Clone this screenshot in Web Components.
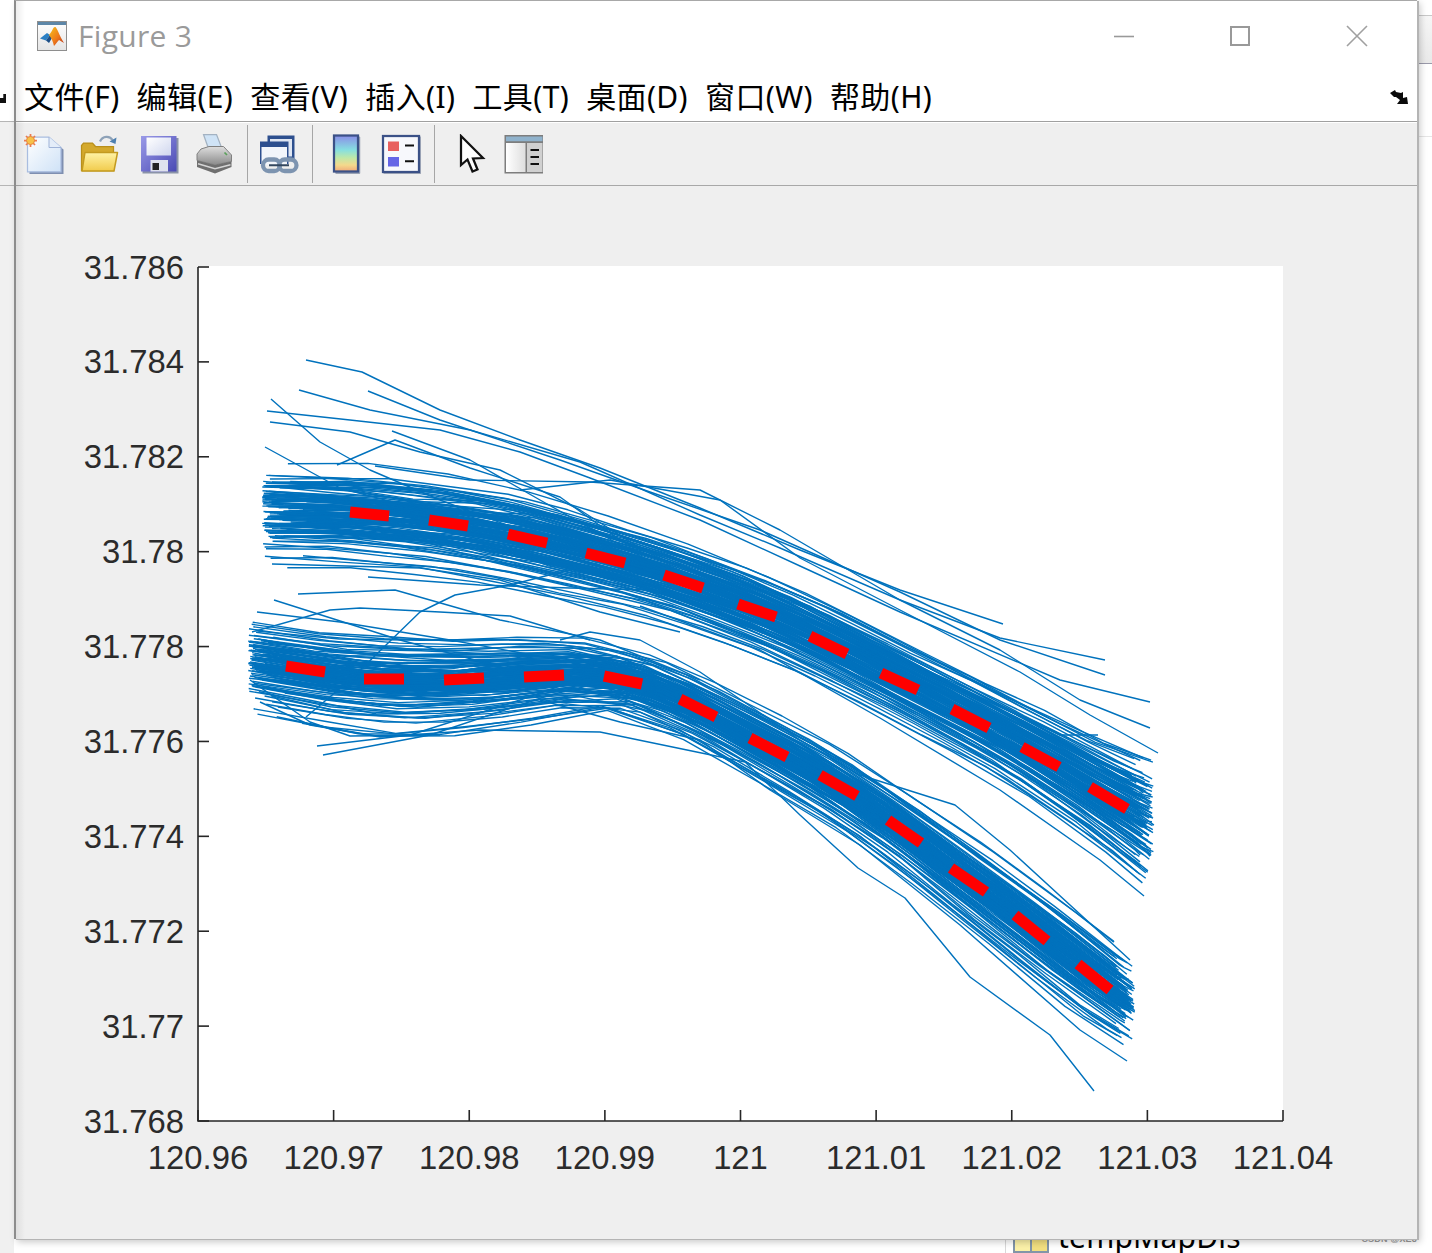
<!DOCTYPE html>
<html lang="zh">
<head>
<meta charset="utf-8">
<title>Figure 3</title>
<style>
  html, body { margin: 0; padding: 0; background: #fff; }
</style>
</head>
<body>
<shot-page>
  <desk-backdrop slot="back"></desk-backdrop>
  <figure-window title-text="Figure 3">
    <menu-item>文件(F)</menu-item>
    <menu-item>编辑(E)</menu-item>
    <menu-item>查看(V)</menu-item>
    <menu-item>插入(I)</menu-item>
    <menu-item>工具(T)</menu-item>
    <menu-item>桌面(D)</menu-item>
    <menu-item>窗口(W)</menu-item>
    <menu-item>帮助(H)</menu-item>

    <tool-icon slot="tools" name="new" style="margin-left:8px"></tool-icon>
    <tool-icon slot="tools" name="open" style="margin-left:16px"></tool-icon>
    <tool-icon slot="tools" name="save" style="margin-left:19px"></tool-icon>
    <tool-icon slot="tools" name="print" style="margin-left:16px"></tool-icon>
    <tool-sep slot="tools" style="margin-left:12px"></tool-sep>
    <tool-icon slot="tools" name="link" style="margin-left:11px"></tool-icon>
    <tool-sep slot="tools" style="margin-left:13px"></tool-sep>
    <tool-icon slot="tools" name="colorbar" style="margin-left:13px"></tool-icon>
    <tool-icon slot="tools" name="legend" style="margin-left:15px"></tool-icon>
    <tool-sep slot="tools" style="margin-left:13px"></tool-sep>
    <tool-icon slot="tools" name="cursor" style="margin-left:12px"></tool-icon>
    <tool-icon slot="tools" name="panel" style="margin-left:16px"></tool-icon>

    <plot-chart slot="plot"></plot-chart>
  </figure-window>
</shot-page>

<script>
// --- page shell ---
class ShotPage extends HTMLElement {
  constructor() {
    super();
    this.attachShadow({ mode: 'open' });
    this.shadowRoot.innerHTML = `
      <style>
        :host {
          display: block;
          position: relative;
          width: 1432px;
          height: 1253px;
          overflow: hidden;
          background: #fff;
        }
      </style>
      <slot name="back"></slot>
      <slot></slot>
    `;
  }
}

// whatever is visible around the screenshot window
class DeskBackdrop extends HTMLElement {
  constructor() {
    super();
    this.attachShadow({ mode: 'open' });
    this.shadowRoot.innerHTML = `
      <style>
        :host {
          position: absolute;
          inset: 0;
          display: grid;
          grid-template-columns: 14px 1fr 15px;
          grid-template-rows: 1fr;
        }
        .left { display: flex; flex-direction: column; }
        .left .a { height: 121px; background: #fff; border-bottom: 1px solid #b5b5b5; box-sizing: content-box; display: flex; align-items: flex-end; }
        .left .b { height: 63px; background: #f0f0f0; border-bottom: 1px solid #b5b5b5; }
        .left .c { flex: 1; background: #f0f0f0; }
        .mark { width: 6px; height: 9px; margin-bottom: 18px; background: #111; clip-path: polygon(0 45%, 55% 45%, 55% 0, 100% 0, 100% 100%, 0 100%); }
        .mid { display: flex; align-items: flex-end; padding-left: 991px; }
        .file { display: flex; align-items: flex-end; height: 30px; border-left: 1px solid #d8d8d8; padding-left: 7px; gap: 9px; }
        .folder { width: 36px; height: 30px; box-sizing: border-box; border: 2px solid #8295a8; background: linear-gradient(90deg, #fbf1a8 0 48%, #8295a8 48% 54%, #f2df80 54%); }
        .name { font: 30px/30px "Noto Sans", "Open Sans", sans-serif; color: #000; height: 30px; margin-bottom: 1px; letter-spacing: .2px; }
        .right { display: flex; flex-direction: column; position: relative; }
        .r1 { height: 15px; background: #fff; border-bottom: 1px solid #c8c8c8; }
        .r2 { height: 47px; background: linear-gradient(#f6f6f6, #e9e9e9); border-bottom: 1px solid #9a9aaa; }
        .r3 { height: 72px; background: #fff; border-bottom: 1px solid #e6e6e6; }
        .r4 { flex: 1; background: #fff; }
        .wm { position: absolute; right: 15px; bottom: 9px; font: bold 9px/10px "Liberation Sans", sans-serif; color: #999; white-space: nowrap; letter-spacing: .2px; }
      </style>
      <div class="left"><div class="a"><div class="mark"></div></div><div class="b"></div><div class="c"></div></div>
      <div class="mid">
        <div class="file"><div class="folder"></div><div class="name">tempMapDis</div></div>
      </div>
      <div class="right"><div class="r1"></div><div class="r2"></div><div class="r3"></div><div class="r4"></div><div class="wm">CSDN @XE8</div></div>
    `;
  }
}

// --- the figure window ---
class FigureWindow extends HTMLElement {
  constructor() {
    super();
    const title = this.getAttribute('title-text') || '';
    this.attachShadow({ mode: 'open' });
    this.shadowRoot.innerHTML = `
      <style>
        :host {
          display: flex;
          flex-direction: column;
          position: relative;
          box-sizing: border-box;
          width: 1403px;
          height: 1239px;
          margin-left: 14px;
          border-left: 2px solid #8c8c8c;
          border-top: 1px solid #a8a8a8;
          background: #efefef;
          box-shadow: 2px 1px 0 #b4b4b4, 3px 3px 7px rgba(0,0,0,.22);
        }
        :host::after {
          content: '';
          position: absolute;
          left: 0;
          top: 0;
          bottom: 0;
          width: 9px;
          background: linear-gradient(90deg, rgba(0,0,0,.07), rgba(0,0,0,0));
          pointer-events: none;
        }
        .titlebar {
          height: 72px;
          flex: none;
          box-sizing: border-box;
          display: flex;
          align-items: center;
          padding-left: 21px;
          padding-bottom: 2px;
          background: #fff;
        }
        .logo { width: 30px; height: 30px; flex: none; }
        .name {
          margin-left: 11px;
          font: 30px/40px "Open Sans", "Noto Sans", sans-serif;
          letter-spacing: .3px;
          color: #9a9a9a;
        }
        .winbtns { margin-left: auto; display: flex; align-items: center; }
        .winbtns svg { display: block; width: 22px; height: 22px; }
        .min { margin-right: 94px; }
        .max { margin-right: 95px; }
        .cls { margin-right: 49px; }
        .menubar {
          height: 49px;
          flex: none;
          box-sizing: border-box;
          display: flex;
          align-items: center;
          gap: 17px;
          padding-left: 8px;
          background: #fff;
          border-bottom: 1px solid #a0a0a0;
        }
        .dock { margin-left: auto; margin-right: 8px; width: 20px; height: 16px; display: block; }
        .toolbar {
          height: 64px;
          flex: none;
          box-sizing: border-box;
          display: flex;
          align-items: center;
          background: #efefef;
          border-bottom: 1px solid #a8a8a8;
          box-shadow: inset 0 1px 0 #fff;
        }
        .plot { flex: 1; min-height: 0; }
      </style>
      <div class="titlebar">
        <svg class="logo" viewBox="0 0 30 30">
          <defs>
            <linearGradient id="lg-bg" x1="0" y1="0" x2="0" y2="1"><stop offset="0" stop-color="#fff"/><stop offset="1" stop-color="#e4e4e4"/></linearGradient>
            <linearGradient id="lg-peak" x1="0" y1="0" x2="1" y2="1"><stop offset="0" stop-color="#f6c21c"/><stop offset=".55" stop-color="#ee7a1a"/><stop offset="1" stop-color="#b8301a"/></linearGradient>
          </defs>
          <rect x=".5" y=".5" width="29" height="29" fill="url(#lg-bg)" stroke="#8e8e8e"/>
          <rect x="1" y="1" width="28" height="3" fill="#5d87a8"/>
          <path d="M3 17.5 L10 12 L13 14 L9 19.5 Z" fill="#2a7fc4"/>
          <path d="M9 19.5 L13 14 L15 17 L12 22 Z" fill="#1c4e86"/>
          <path d="M12 14 C15 11 16 6 18 6 C20 6 22 14 27 22 L22 19 C20 21 19 23 17 25 C16 21 15 18 12 14 Z" fill="url(#lg-peak)"/>
        </svg>
        <div class="name">${title}</div>
        <div class="winbtns">
          <svg class="min" viewBox="0 0 22 22"><path d="M1 11.5h20" stroke="#999" stroke-width="1.6"/></svg>
          <svg class="max" viewBox="0 0 22 22"><rect x="2" y="2" width="18" height="18" fill="none" stroke="#999" stroke-width="2"/></svg>
          <svg class="cls" viewBox="0 0 22 22"><path d="M1 1L21 21M21 1L1 21" stroke="#a0a0a0" stroke-width="1.6"/></svg>
        </div>
      </div>
      <div class="menubar">
        <slot></slot>
        <svg class="dock" viewBox="0 0 20 16"><path d="M1 4 L6 1 L7 3 L12 4 L14 3 L14 9 L18 8 L19 15 L8 15 L11 11 L7 8 L5 8 L3 6 Z" fill="#0a0a0a"/></svg>
      </div>
      <div class="toolbar"><slot name="tools"></slot></div>
      <div class="plot"><slot name="plot"></slot></div>
    `;
  }
}

class MenuItem extends HTMLElement {
  constructor() {
    super();
    this.attachShadow({ mode: 'open' });
    this.shadowRoot.innerHTML = `
      <style>
        :host {
          display: block;
          font: 30px/40px "Noto Sans", "Noto Sans CJK SC", sans-serif;
          letter-spacing: .4px;
          color: #000;
          white-space: nowrap;
        }
      </style>
      <slot></slot>
    `;
  }
}

class ToolSep extends HTMLElement {
  constructor() {
    super();
    this.attachShadow({ mode: 'open' });
    this.shadowRoot.innerHTML = `
      <style>
        :host { display: block; width: 1px; height: 58px; background: #a6a6a6; flex: none; }
      </style>
    `;
  }
}

// 16-unit icons, drawn like the old MATLAB toolbar set and softened a bit like the scaled screenshot
const ICONS = {
  new: `
    <defs><linearGradient id="g" x1="0" y1="0" x2="1" y2="1"><stop offset="0" stop-color="#fff"/><stop offset="1" stop-color="#cfe2f7"/></linearGradient></defs>
    <path d="M2.2 2 H10.6 L15.8 6.2 V16 H2.2 Z" fill="#7f8fb0"/>
    <path d="M1.4 1.2 H10 L14.8 5.4 V15.1 H1.4 Z" fill="url(#g)" stroke="#a9bde0" stroke-width=".5"/>
    <path d="M10 1.2 V5.4 H14.8" fill="#e4edf9" stroke="#9fb3d8" stroke-width=".4"/>
    <g stroke="#ec7a4f" stroke-width=".7"><path d="M2.6 0 V5.2 M0 2.6 H5.2 M.8 .8 L4.4 4.4 M4.4 .8 L.8 4.4"/></g>
    <circle cx="2.6" cy="2.6" r="1.6" fill="#f6c24a" stroke="#e88a3c" stroke-width=".4"/>`,
  open: `
    <defs><linearGradient id="g" x1="0" y1="0" x2="0" y2="1"><stop offset="0" stop-color="#fff3a6"/><stop offset="1" stop-color="#f1cb4c"/></linearGradient></defs>
    <path d="M8 3 C9 .6 12 .6 13 2.4" fill="none" stroke="#8ea2b8" stroke-width=".9"/>
    <path d="M14.6 1.4 L14.2 4 L11.8 3 Z" fill="#4d7fb0"/>
    <path d="M.6 14.6 V4.6 L1.4 3.6 H5 L6.2 5 H13.4 V14.6 Z" fill="#d4a92c" stroke="#b98f1a" stroke-width=".5"/>
    <path d="M.8 14.8 L2 7.4 H15 L13.6 14.8 Z" fill="url(#g)" stroke="#c39a20" stroke-width=".6" stroke-linejoin="round"/>`,
  save: `
    <defs><linearGradient id="g" x1="0" y1="0" x2="1" y2="1"><stop offset="0" stop-color="#9a9ae8"/><stop offset="1" stop-color="#4a4ab4"/></linearGradient><linearGradient id="w" x1="0" y1="0" x2="1" y2="1"><stop offset="0" stop-color="#fff"/><stop offset="1" stop-color="#cfd6ee"/></linearGradient></defs>
    <path d="M1.4 1.6 H15.8 V15.8 H1.4 Z" fill="#8a93a8"/>
    <path d="M.8 .8 H15 V15 H.8 Z" fill="url(#g)"/>
    <rect x="3" y="1.4" width="9.8" height="7.2" fill="url(#w)"/>
    <rect x="4.6" y="10.4" width="7" height="4.6" fill="#dfe2ee"/>
    <rect x="5.4" y="11.6" width="2.6" height="2.8" fill="#222"/>`,
  print: `
    <defs><linearGradient id="g" x1="0" y1="0" x2="0" y2="1"><stop offset="0" stop-color="#dedede"/><stop offset="1" stop-color="#8a8a8a"/></linearGradient></defs>
    <path d="M3.4 .2 H8.6 L11 6.4 H5.6 Z" fill="#cfe3f6" stroke="#a3b2c2" stroke-width=".5"/>
    <path d="M2.4 6 L5.6 5 H11.4 L14.6 8.4 V11 L8 12.4 L.8 10.6 V8 Z" fill="url(#g)" stroke="#808080" stroke-width=".4"/>
    <path d="M.8 10.6 L8 12.4 L14.6 11 V13.2 L8 15.8 L.8 13.2 Z" fill="#6f6f6f"/>
    <path d="M1.2 11.9 L8 13.9 L14.2 12.3" fill="none" stroke="#d4d4d4" stroke-width=".6"/>
    <path d="M11.8 7.4 L12.8 8.4" stroke="#5aa05a" stroke-width=".7"/>`,
  link: `
    <path d="M3.4 .6 H14.2 V10 H3.4 Z" fill="#2d4f8e"/>
    <rect x="4.4" y="2" width="8.8" height="7" fill="#dfe6f2"/>
    <path d="M.4 3 H11.8 V12 H.4 Z" fill="#2d4f8e"/>
    <path d="M1 5.2 H11.2 V12.4 H1 Z" fill="#f2f5fa"/>
    <g fill="none" stroke="#7d94b0" stroke-width="1.7">
      <rect x="1.6" y="10.2" width="6.8" height="4.6" rx="2.3"/>
      <rect x="8" y="10.2" width="7" height="4.6" rx="2.3"/>
    </g>
    <path d="M4 12.5 H12" stroke="#33475f" stroke-width=".8"/>`,
  colorbar: `
    <defs><linearGradient id="g" x1="0" y1="0" x2="0" y2="1"><stop offset="0" stop-color="#8a8de8"/><stop offset=".4" stop-color="#86dfe0"/><stop offset=".62" stop-color="#bfe8a8"/><stop offset=".82" stop-color="#f4d98c"/><stop offset="1" stop-color="#f0a878"/></linearGradient></defs>
    <rect x="3.7" y="1" width="10" height="15" fill="#9aa3b4" rx=".4"/>
    <rect x="3.2" y=".6" width="9.6" height="14.4" fill="url(#g)" stroke="#3b5187" stroke-width=".9"/>`,
  legend: `
    <rect x="1" y="1" width="15" height="15" fill="#a6adbb"/>
    <rect x=".8" y=".8" width="14.4" height="14.4" fill="#f7f8fc" stroke="#3b5187" stroke-width=".9"/>
    <rect x="2.8" y="3" width="4.4" height="3.8" fill="#e8605f"/>
    <rect x="2.8" y="9.2" width="4.4" height="3.8" fill="#6565e6"/>
    <path d="M9.6 4.6 H13.2 M9.6 10.9 H13.2" stroke="#111" stroke-width=".9"/>`,
  cursor: `
    <path d="M5.6 .8 V12.4 L8.2 10.2 L10.2 15 L12.2 14.2 L10.4 9.8 L14.4 9.6 Z" fill="#fff" stroke="#111" stroke-width=".9" stroke-linejoin="miter"/>`,
  panel: `
    <rect x=".6" y=".4" width="15.8" height="15.4" fill="#7d7d7d"/>
    <rect x="1.2" y="1" width="14.6" height="1.9" fill="#8fb2cc"/>
    <defs><linearGradient id="g" x1="0" y1="0" x2="1" y2="0"><stop offset="0" stop-color="#fff"/><stop offset="1" stop-color="#dedede"/></linearGradient></defs>
    <rect x="1.2" y="3.6" width="7.8" height="11.6" fill="url(#g)"/>
    <rect x="9.6" y="3.6" width="6.2" height="11.6" fill="#d0d0d0"/>
    <path d="M11 6.4 H14.4 M11 9.2 H14.4 M11 12 H14.4" stroke="#111" stroke-width=".8"/>`
};

class ToolIcon extends HTMLElement {
  constructor() {
    super();
    const name = this.getAttribute('name');
    this.attachShadow({ mode: 'open' });
    this.shadowRoot.innerHTML = `
      <style>
        :host { display: block; width: 40px; height: 40px; flex: none; }
        svg { display: block; width: 40px; height: 40px; filter: blur(.55px); }
      </style>
      <svg viewBox="0 0 16 16">${ICONS[name] || ''}</svg>
    `;
  }
}

// --- the plot ---
// seeded so every run draws the same bundle
function makeRandom(seed) {
  return () => {
    seed = (seed + 0x6D2B79F5) | 0;
    let t = Math.imul(seed ^ (seed >>> 15), 1 | seed);
    t = (t + Math.imul(t ^ (t >>> 7), 61 | t)) ^ t;
    return ((t ^ (t >>> 14)) >>> 0) / 4294967296;
  };
}

function lerpTable(table, x) {
  if (x <= table[0][0]) return table[0][1];
  for (let i = 1; i < table.length; i++) {
    if (x <= table[i][0]) {
      const [x0, y0] = table[i - 1];
      const [x1, y1] = table[i];
      return y0 + (y1 - y0) * (x - x0) / (x1 - x0);
    }
  }
  return table[table.length - 1][1];
}

const UPPER_CENTER = [[262, 514], [350, 516], [429, 524], [508, 537], [586, 556], [664, 578], [738, 605], [810, 636], [881, 673], [952, 709], [1022, 747], [1090, 789], [1150, 826]];
const UPPER_SPREAD = [[262, 36], [400, 38], [550, 38], [650, 34], [760, 34], [880, 34], [1000, 36], [1100, 44], [1150, 54]];
const LOWER_CENTER = [[248, 664], [286, 670], [364, 682], [444, 683], [524, 678], [604, 672], [680, 699], [750, 738], [820, 775], [888, 820], [951, 868], [1015, 915], [1078, 964], [1135, 1004]];
const LOWER_SPREAD = [[248, 34], [400, 38], [520, 34], [600, 26], [700, 27], [800, 30], [900, 32], [1000, 36], [1080, 38], [1135, 34]];

// lines that stray out of the bundles, traced from the figure
const STRAYS = [
  [[306, 360], [362, 372], [440, 410], [520, 440], [600, 468], [700, 508], [800, 550], [900, 590], [1003, 624]],
  [[299, 390], [370, 410], [470, 430], [580, 462], [700, 515], [780, 548], [900, 600], [1000, 638], [1105, 660]],
  [[368, 391], [440, 420], [560, 460], [650, 492], [760, 530], [900, 592], [1000, 640], [1105, 675]],
  [[267, 411], [350, 420], [440, 430], [520, 452], [590, 478], [700, 520], [800, 566], [900, 612], [1060, 680], [1150, 702]],
  [[270, 422], [350, 432], [420, 452], [500, 470], [580, 510], [640, 548]],
  [[271, 399], [320, 442], [370, 470], [440, 500], [520, 530], [600, 560]],
  [[337, 465], [395, 440], [470, 468], [560, 497], [620, 540], [700, 572]],
  [[265, 447], [340, 488], [430, 512], [520, 540]],
  [[375, 466], [470, 480], [590, 482], [700, 490], [780, 530], [900, 600], [1000, 650], [1080, 700], [1150, 728]],
  [[392, 431], [470, 460], [540, 500], [640, 556], [720, 596]],
  [[520, 490], [610, 480], [720, 500], [800, 558], [900, 610], [1020, 672], [1090, 715], [1158, 753]],
  [[475, 498], [590, 528], [700, 575], [850, 640], [960, 688], [1060, 735], [1098, 735]],
  [[272, 564], [420, 568], [500, 580], [600, 612], [680, 632]],
  [[368, 577], [480, 585], [570, 588], [650, 590], [720, 610]],
  [[298, 594], [395, 590], [500, 620], [600, 640], [700, 680]],
  [[306, 717], [350, 680], [420, 612], [455, 595], [510, 585], [600, 562]],
  [[274, 600], [400, 640], [550, 680]],
  [[257, 612], [340, 622], [450, 640], [560, 660]],
  [[252, 632], [330, 610], [360, 608], [440, 612], [510, 616], [590, 640]],
  [[560, 640], [590, 632], [640, 640], [700, 672], [800, 740], [860, 775], [955, 805], [1010, 850], [1130, 960]],
  [[317, 746], [410, 735], [520, 700], [600, 672]],
  [[323, 755], [430, 735], [550, 695], [620, 678]],
  [[260, 702], [310, 725], [380, 737], [480, 730], [600, 732], [745, 762], [800, 815], [858, 868], [905, 898], [970, 977], [1050, 1035], [1094, 1091]],
  [[250, 680], [310, 722], [350, 736], [440, 735]],
  [[540, 700], [620, 722], [700, 740], [770, 790], [860, 845], [960, 925], [1080, 1030], [1127, 1061]],
  [[640, 606], [760, 650], [880, 718], [1000, 790], [1100, 860], [1144, 896]]
];

// fixed red dashes of the mean curves
const RED_DASHES = [
  [350, 512, 389, 516], [429, 520, 468, 526], [508, 534, 547, 543], [586, 553, 625, 563], [664, 575, 703, 588],
  [738, 604, 776, 617], [810, 636, 847, 654], [881, 673, 918, 690], [952, 709, 989, 728], [1022, 747, 1059, 767], [1090, 787, 1127, 809],
  [286, 666, 325, 672], [364, 679, 404, 679], [444, 680, 484, 678], [524, 677, 564, 675], [604, 676, 642, 684], [680, 699, 716, 717],
  [750, 738, 787, 757], [820, 775, 857, 796], [888, 820, 921, 843], [951, 868, 986, 892], [1015, 915, 1047, 941], [1078, 964, 1110, 990]
];

const Y_TICKS = ['31.786', '31.784', '31.782', '31.78', '31.778', '31.776', '31.774', '31.772', '31.77', '31.768'];
const X_TICKS = ['120.96', '120.97', '120.98', '120.99', '121', '121.01', '121.02', '121.03', '121.04'];

function bundlePaths(center, spread, count, seed, overrun, tight) {
  const rnd = makeRandom(seed);
  const firstX = center[0][0];
  const lastX = center[center.length - 1][0];
  const paths = [];
  for (let i = 0; i < count; i++) {
    const u = (rnd() + rnd() - 1) * 1.45 * tight;
    const drift = (rnd() - 0.5) * 0.9;
    const start = firstX + rnd() * rnd() * 60;
    const end = lastX + overrun - rnd() * 22;
    const pts = [];
    const step = 58 + rnd() * 24;
    for (let x = start; ; x += step) {
      const px = Math.min(x, end);
      const t = (px - firstX) / (lastX - firstX);
      // the core only closes up away from the left fringe
      const close = tight < 1 && t < 0.25 ? tight + (1 - tight) * (0.25 - t) * 4 : 1;
      const v = (u * close) + drift * (t - 0.5) * tight + (rnd() - 0.5) * 0.1;
      pts.push(`${px.toFixed(1)} ${(lerpTable(center, px) + v * lerpTable(spread, px)).toFixed(1)}`);
      if (px >= end) break;
    }
    paths.push('M' + pts.join('L'));
  }
  return paths;
}

class PlotChart extends HTMLElement {
  constructor() {
    super();
    this.attachShadow({ mode: 'open' });

    const yStep = (1121 - 267) / 9;
    const xStep = (1283 - 198) / 8;

    const yTicks = Y_TICKS.map((label, i) => {
      const y = 267 + i * yStep;
      return `<path d="M198 ${y}h11" class="axis"/><text x="184" y="${y + 11.5}" text-anchor="end">${label}</text>`;
    }).join('');
    const xTicks = X_TICKS.map((label, i) => {
      const x = 198 + i * xStep;
      return `<path d="M${x} 1121v-11" class="axis"/><text x="${x}" y="1169" text-anchor="middle">${label}</text>`;
    }).join('');

    const lines = [
      ...bundlePaths(UPPER_CENTER, UPPER_SPREAD, 100, 11, 4, 1),
      ...bundlePaths(UPPER_CENTER, UPPER_SPREAD, 45, 47, 4, 0.62),
      ...bundlePaths(LOWER_CENTER, LOWER_SPREAD, 100, 29, 0, 1),
      ...bundlePaths(LOWER_CENTER, LOWER_SPREAD, 45, 83, 0, 0.62),
      ...STRAYS.map(pts => 'M' + pts.map(p => p.join(' ')).join('L'))
    ];

    this.shadowRoot.innerHTML = `
      <style>
        :host { display: block; height: 100%; }
        svg { display: block; width: 1401px; height: 1053px; }
        .axis { stroke: #262626; stroke-width: 1.6; fill: none; }
        text { font: 32.8px "Liberation Sans", Arial, sans-serif; fill: #2b2b2b; }
        .blue { stroke: #0072BD; stroke-width: 1.4; fill: none; stroke-linejoin: round; }
        .red { stroke: #ff0000; stroke-width: 11; fill: none; }
      </style>
      <svg viewBox="16 186 1401 1053">
        <rect x="198" y="266" width="1085" height="855" fill="#fff"/>
        ${lines.map(d => `<path class="blue" d="${d}"/>`).join('')}
        ${RED_DASHES.map(d => `<path class="red" d="M${d[0]} ${d[1]}L${d[2]} ${d[3]}"/>`).join('')}
        <path class="axis" d="M198 267V1121H1283"/>
        ${yTicks}
        ${xTicks}
      </svg>
    `;
  }
}

customElements.define('shot-page', ShotPage);
customElements.define('desk-backdrop', DeskBackdrop);
customElements.define('figure-window', FigureWindow);
customElements.define('menu-item', MenuItem);
customElements.define('tool-sep', ToolSep);
customElements.define('tool-icon', ToolIcon);
customElements.define('plot-chart', PlotChart);
</script>
</body>
</html>
